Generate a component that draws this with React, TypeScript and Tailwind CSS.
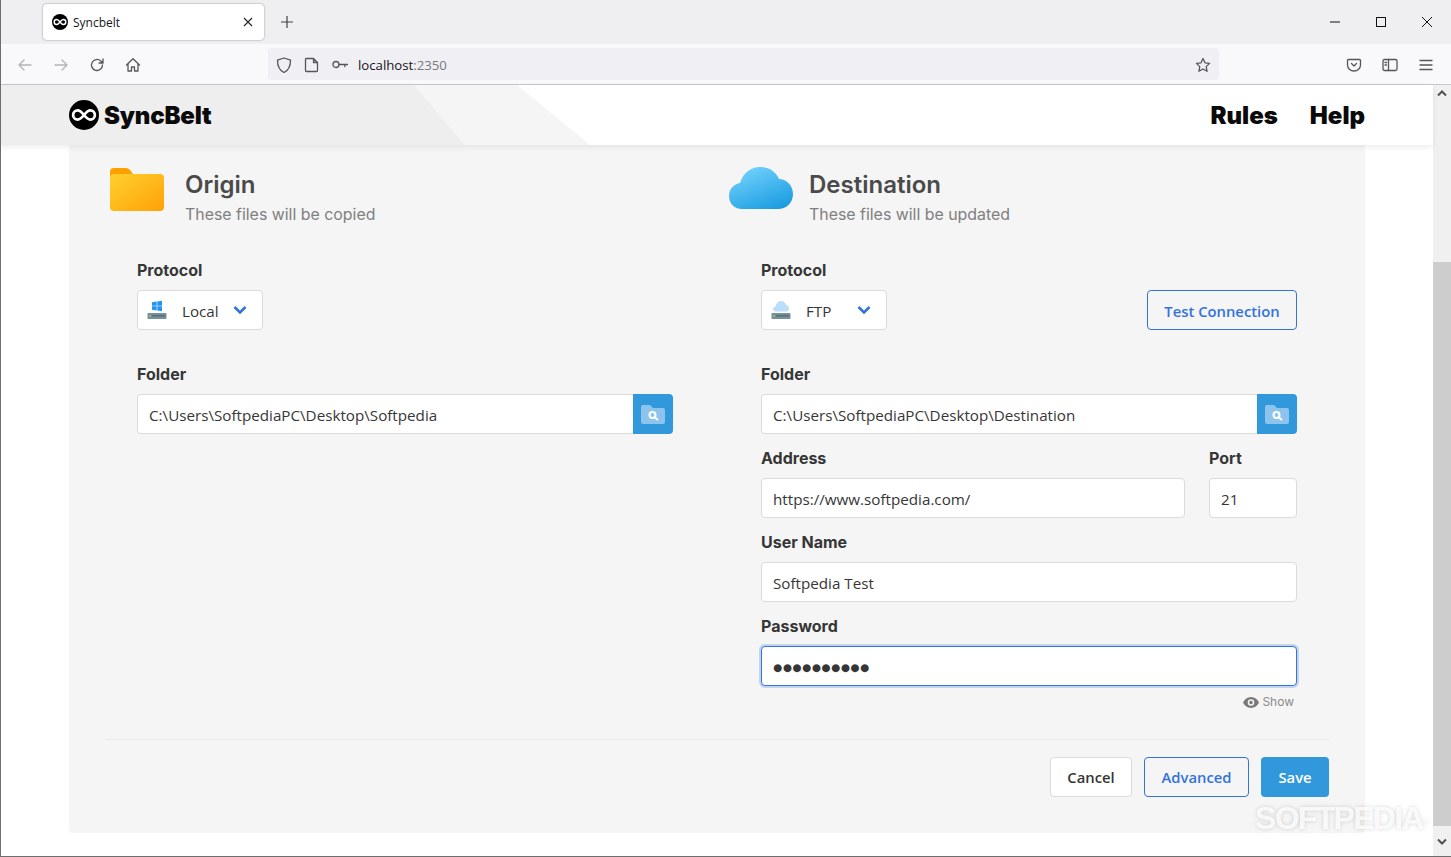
import React from 'react'

const Logo = ({ size }: { size: number }) => (
  <svg width={size} height={size} viewBox="0 0 24 24">
    <circle cx="12" cy="12" r="12" fill="#000" />
    <path
      d="M12 12C10 9.500 8.600 8.300 7 8.300a3.700 3.700 0 0 0 0 7.400c1.600 0 3-1.200 5-3.700s3.400-3.700 5-3.700a3.700 3.700 0 0 1 0 7.400c-1.600 0-3-1.200-5-3.700z"
      fill="none"
      stroke="#fff"
      strokeWidth="2.200"
    />
  </svg>
)

const ChromeIcon = ({ children, light }: { children: React.ReactNode; light?: boolean }) => (
  <div className="w-9 h-8 flex items-center justify-center pt-[2px]">
    <svg
      width="16"
      height="16"
      viewBox="0 0 16 16"
      fill="none"
      stroke={light ? '#b4b4b8' : '#55555a'}
      strokeWidth="1.300"
      strokeLinecap="round"
      strokeLinejoin="round"
    >
      {children}
    </svg>
  </div>
)

const UrlIcon = ({ children, className }: { children: React.ReactNode; className: string }) => (
  <svg
    className={className}
    width="16"
    height="16"
    viewBox="0 0 16 16"
    fill="none"
    stroke="#55555a"
    strokeWidth="1.300"
    strokeLinecap="round"
    strokeLinejoin="round"
  >
    {children}
  </svg>
)

const WinBtn = ({ children }: { children: React.ReactNode }) => (
  <div className="w-[46px] h-[44px] flex items-center justify-center">
    <svg width="12" height="12" viewBox="0 0 12 12" fill="none" stroke="#111" strokeWidth="1">
      {children}
    </svg>
  </div>
)

const BrowserChrome = () => (
  <div className="shrink-0" style={{ fontFamily: '"Open Sans", sans-serif' }}>
    <div className="h-[44px] bg-[#efeff1] flex items-start">
      <div className="ml-[42px] mt-[4px] w-[221px] h-[36px] bg-white rounded shadow-[0_0_2px_rgba(0,0,0,0.45)] flex items-center pl-[9px] pr-[11px]">
        <Logo size={16} />
        <span className="ml-[5px] pt-[1px] text-[12px] text-[#15141a]">Syncbelt</span>
        <svg className="ml-auto" width="10" height="10" viewBox="0 0 10 10" stroke="#222" strokeWidth="1.100">
          <path d="M1 1l8 8M9 1l-8 8" />
        </svg>
      </div>
      <svg className="ml-[16px] mt-[15px]" width="14" height="14" viewBox="0 0 14 14" stroke="#444" strokeWidth="1.200">
        <path d="M7 1v12M1 7h12" />
      </svg>
      <div className="ml-auto flex pr-[1px]">
        <WinBtn>
          <path d="M1 6h10" />
        </WinBtn>
        <WinBtn>
          <rect x="1.500" y="1.500" width="9" height="9" />
        </WinBtn>
        <WinBtn>
          <path d="M1 1l10 10M11 1L1 11" />
        </WinBtn>
      </div>
    </div>
    <div className="h-[41px] bg-[#f9f9fb] border-b border-[#c8c8cc] flex items-start pl-[6px] pt-[4px]">
      <ChromeIcon light>
        <path d="M14 8H2M7 3L2 8l5 5" />
      </ChromeIcon>
      <ChromeIcon light>
        <path d="M2 8h12M9 3l5 5-5 5" />
      </ChromeIcon>
      <ChromeIcon>
        <path d="M13.500 8a5.500 5.500 0 1 1-1.700-4L14 6V2M14 6h-4" />
      </ChromeIcon>
      <ChromeIcon>
        <path d="M1.500 8L8 1.800 14.500 8M3 7v7h3.500v-4h3v4H13V7" />
      </ChromeIcon>
      <div className="ml-[117px] w-[951px] h-[32px] pt-[2px] bg-[#f0f0f4] rounded flex items-center">
        <UrlIcon className="ml-[8px]">
          <path d="M8 1l6.500 2.200c0 6-1.800 10-6.500 12.300C3.300 13.200 1.500 9.200 1.500 3.200z" />
        </UrlIcon>
        <UrlIcon className="ml-[12px]">
          <path d="M2.500 1.500h7l4 4v8a1 1 0 0 1-1 1h-10a1 1 0 0 1-1-1v-11a1 1 0 0 1 1-1zM9.500 1.500v4h4" />
        </UrlIcon>
        <UrlIcon className="ml-[12px]">
          <circle cx="4" cy="7.500" r="3" />
          <path d="M7 7.500h8.500M12.800 7.500v2" />
        </UrlIcon>
        <span className="ml-[10px] text-[13.2px] text-[#15141a] pt-[2px]">
          localhost<span className="text-[#77777c]">:2350</span>
        </span>
        <UrlIcon className="ml-auto mr-[8px]">
          <path d="M8 1.500l2 4.300 4.600.6-3.400 3.200.9 4.700L8 12l-4.100 2.300.9-4.700L1.400 6.400 6 5.800z" />
        </UrlIcon>
      </div>
      <div className="ml-[117px] flex">
        <ChromeIcon>
          <path d="M2.500 2.500h11a1 1 0 0 1 1 1V8a6.500 6 0 0 1-13 0V3.500a1 1 0 0 1 1-1zM5.500 6.500L8 9l2.500-2.500" />
        </ChromeIcon>
        <ChromeIcon>
          <rect x="1" y="2.500" width="14" height="11" rx="1.500" />
          <path d="M6.500 2.500v11M3 5.500h1.500M3 8h1.500" />
        </ChromeIcon>
        <ChromeIcon>
          <path d="M2 3.500h12M2 8h12M2 12.500h12" />
        </ChromeIcon>
      </div>
    </div>
  </div>
)

const Header = () => (
  <header className="relative z-10 h-[60px] bg-white shadow-[0_2px_6px_rgba(0,0,0,0.08)] flex items-center justify-between pl-[69px] pr-[68px] shrink-0">
    <svg className="absolute left-0 top-0" width="600" height="60" viewBox="0 0 600 60">
      <path d="M517 0L590 60H0V0z" fill="#f5f5f5" />
      <path d="M414 0L465 60H0V0z" fill="#eeeeee" />
    </svg>
    <div className="relative flex items-center gap-[5px]">
      <Logo size={30} />
      <span className="pt-[2px] text-[24px] font-black tracking-[-0.2px] text-[#0a0a0a] leading-none">SyncBelt</span>
    </div>
    <nav className="relative pt-[2px] flex gap-[32px] text-[24px] font-black text-[#0a0a0a]">
      <span>Rules</span>
      <span>Help</span>
    </nav>
  </header>
)

const FolderArt = () => (
  <svg width="54" height="44" viewBox="0 0 54 44">
    <defs>
      <linearGradient id="folderFront" x1="0" y1="0" x2="1" y2="1">
        <stop offset="0" stopColor="#ffd02f" />
        <stop offset="1" stopColor="#ffa106" />
      </linearGradient>
    </defs>
    <path d="M0 4a4 4 0 0 1 4-4h12c2 0 3 1 4 2l3 4v8H0z" fill="#ffa000" />
    <rect x="0" y="6" width="54" height="37" rx="4" fill="url(#folderFront)" />
  </svg>
)

const CloudArt = () => (
  <svg width="64" height="42" viewBox="0 0 64 42">
    <defs>
      <linearGradient id="cloudFill" x1="0.2" y1="0" x2="0.8" y2="1">
        <stop offset="0" stopColor="#74d3fd" />
        <stop offset="1" stopColor="#1a9be0" />
      </linearGradient>
    </defs>
    <path
      d="M13 42C5 42 0 36 0 29C0 22 5 17 11 16C14 6 22 0 31 0C40 0 47 5 50 12C58 12 64 19 64 27C64 36 57 42 49 42Z"
      fill="url(#cloudFill)"
    />
  </svg>
)

const DriveIcon = ({ cloud }: { cloud?: boolean }) => (
  <svg width="20" height="20" viewBox="0 0 20 20">
    {cloud ? (
      <path
        d="M5 11.500C3 11.500 2 10.500 2 9C2 7.500 3 6.500 4.500 6.500C5 3.500 7 1 10 1C13 1 14.500 3 15 5C17 5 18 7 18 8.500C18 10.500 17 11.500 15 11.500Z"
        fill="#bbdefb"
      />
    ) : (
      <path d="M5 2.200L9.700 1.500V5.700H5zM10.300 1.400L15 .7V5.700h-4.700zM5 6.300h4.700v4.200L5 9.800zM10.300 6.300H15v5l-4.700-.7z" fill="#2196f3" />
    )}
    <rect x="0.500" y="13" width="19" height="6" rx="0.800" fill="#78909c" />
    <rect x="5" y="15" width="13" height="1.500" fill="#546e7a" />
    <rect x="2" y="15" width="1.800" height="2" fill="#8bc34a" />
  </svg>
)

const Label = ({ children }: { children: React.ReactNode }) => (
  <label className="block h-6 mb-2 text-[16px] leading-6 font-bold text-[#363636]">{children}</label>
)

const inputBase = 'w-full h-10 px-[11px] bg-white border rounded text-[#363636] outline-none'
const textInput = `${inputBase} pt-[2px] text-[15.2px] border-[#dbdbdb]`

const ProtocolSelect = ({ value, cloud }: { value: string; cloud?: boolean }) => (
  <div className="w-[126px] h-10 bg-white border border-[#dbdbdb] rounded flex items-center pl-[9px] text-[15.2px] text-[#363636]">
    <DriveIcon cloud={cloud} />
    <span className="ml-[15px] pt-[2px]" style={{ fontFamily: '"Open Sans", sans-serif' }}>
      {value}
    </span>
    <svg className="ml-auto mr-[15px]" width="14" height="10" viewBox="0 0 14 10" fill="none" stroke="#3273dc" strokeWidth="2.600">
      <path d="M1.500 2l5.500 5.500L12.500 2" />
    </svg>
  </div>
)

const FolderField = ({ value }: { value: string }) => (
  <div>
    <Label>Folder</Label>
    <div className="flex">
      <input
        readOnly
        value={value}
        className={`${textInput} rounded-r-none border-r-0`}
        style={{ fontFamily: '"Open Sans", sans-serif' }}
      />
      <div className="w-10 h-10 shrink-0 bg-[#3298dc] rounded-r flex items-center justify-center">
        <svg width="24" height="19" viewBox="0 0 24 19">
          <path
            d="M0 2a2 2 0 0 1 2-2h6c1 0 1.500.5 2 1l2 2h10a2 2 0 0 1 2 2v12a2 2 0 0 1-2 2H2a2 2 0 0 1-2-2z"
            fill="#8cc4ee"
          />
          <circle cx="11.500" cy="10" r="3" fill="none" stroke="#fff" strokeWidth="2" />
          <path d="M14 12.500l3 2.500" stroke="#fff" strokeWidth="2.200" />
        </svg>
      </div>
    </div>
  </div>
)

const Field = ({ label, value, className }: { label: string; value: string; className?: string }) => (
  <div className={className}>
    <Label>{label}</Label>
    <input readOnly value={value} className={textInput} style={{ fontFamily: '"Open Sans", sans-serif' }} />
  </div>
)

const ColumnHead = ({ art, title, sub, indent }: { art: React.ReactNode; title: string; sub: string; indent: string }) => (
  <div className={`flex h-[89px] pt-[23px] ${indent}`}>
    {art}
    <div className="pt-[2px]">
      <h2 className="text-[24px] leading-[30px] font-semibold text-[#4a4a4a]">{title}</h2>
      <p className="mt-[3px] text-[15.9px] leading-6 text-[#808080]">{sub}</p>
    </div>
  </div>
)

const Btn = ({ children, className }: { children: React.ReactNode; className: string }) => (
  <button
    className={`h-10 rounded border text-[14.8px] font-semibold flex items-center justify-center ${className}`}
    style={{ fontFamily: '"Open Sans", sans-serif' }}
  >
    {children}
  </button>
)

const Panel = () => (
  <main className="ml-[69px] w-[1296px] h-[688px] bg-[#f5f5f5] rounded-b px-9 shrink-0">
    <div className="grid grid-cols-[600px_600px] gap-x-6">
      <section>
        <ColumnHead
          indent="pl-[5px]"
          art={
            <div className="w-[75px] shrink-0">
              <FolderArt />
            </div>
          }
          title="Origin"
          sub="These files will be copied"
        />
        <div className="px-8 pt-6 flex flex-col gap-8">
          <div>
            <Label>Protocol</Label>
            <ProtocolSelect value="Local" />
          </div>
          <FolderField value="C:\Users\SoftpediaPC\Desktop\Softpedia" />
        </div>
      </section>
      <section>
        <ColumnHead
          indent=""
          art={
            <div className="w-[80px] shrink-0 -mt-[1px]">
              <CloudArt />
            </div>
          }
          title="Destination"
          sub="These files will be updated"
        />
        <div className="px-8 pt-6">
          <div className="flex items-end justify-between">
            <div>
              <Label>Protocol</Label>
              <ProtocolSelect value="FTP" cloud />
            </div>
            <Btn className="w-[150px] pt-[2px] bg-transparent border-[#3273dc] text-[#3273dc]">Test Connection</Btn>
          </div>
          <div className="mt-8">
            <FolderField value="C:\Users\SoftpediaPC\Desktop\Destination" />
          </div>
          <div className="mt-3 flex gap-6">
            <Field className="flex-1" label="Address" value="https://www.softpedia.com/" />
            <Field className="w-[88px]" label="Port" value="21" />
          </div>
          <Field className="mt-3" label="User Name" value="Softpedia Test" />
          <div className="mt-3">
            <Label>Password</Label>
            <input
              readOnly
              value="●●●●●●●●●●"
              className={`${inputBase} pt-[1px] text-[10.4px] tracking-[0.6px] border-[#3273dc] shadow-[0_0_0_2px_rgba(50,115,220,0.25)]`}
              style={{ fontFamily: '"DejaVu Sans", sans-serif' }}
            />
            <div className="mt-[7px] pr-[3px] h-[18px] flex items-center justify-end gap-[3px] text-[12px] text-[#8a8a8a]">
              <svg width="16" height="11" viewBox="0 0 16 11">
                <path
                  fillRule="evenodd"
                  d="M8 0c3.500 0 6.500 2.200 8 5.500C14.500 8.800 11.500 11 8 11S1.500 8.800 0 5.500C1.500 2.200 4.500 0 8 0zm0 2.200a3.300 3.300 0 1 0 0 6.600 3.300 3.300 0 0 0 0-6.600zm0 1.500a1.800 1.800 0 1 1 0 3.600 1.800 1.800 0 0 1 0-3.600z"
                  fill="#7a7a7a"
                />
              </svg>
              Show
            </div>
          </div>
        </div>
      </section>
    </div>
    <div className="mt-[28px] border-t border-[#e8e8e8] pt-[17px] flex justify-end gap-3">
      <Btn className="w-[82px] bg-white border-[#dbdbdb] text-[#363636]">Cancel</Btn>
      <Btn className="w-[105px] bg-transparent border-[#3273dc] text-[#3273dc]">Advanced</Btn>
      <Btn className="w-[68px] bg-[#3298dc] border-transparent text-white">Save</Btn>
    </div>
  </main>
)

const Scrollbar = () => (
  <div className="w-[18px] shrink-0 bg-[#f0f0f0] flex flex-col">
    <div className="h-[17px] flex items-center justify-center shrink-0">
      <svg width="10" height="7" viewBox="0 0 10 7" fill="none" stroke="#505050" strokeWidth="2">
        <path d="M1 5.500l4-4 4 4" />
      </svg>
    </div>
    <div className="h-[160px] shrink-0" />
    <div className="h-[564px] bg-[#cdcdcd] shrink-0" />
    <div className="flex-1 flex items-center justify-center">
      <svg width="10" height="7" viewBox="0 0 10 7" fill="none" stroke="#505050" strokeWidth="2">
        <path d="M1 1.500l4 4 4-4" />
      </svg>
    </div>
  </div>
)

const App = () => {
  return (
    <div
      className="relative w-[1451px] h-[857px] overflow-hidden bg-white border-l border-b border-[#6e6e6e] flex flex-col"
      style={{ fontFamily: 'Inter, sans-serif' }}
    >
      <BrowserChrome />
      <div className="flex flex-1 min-h-0">
        <div className="flex-1 flex flex-col -ml-[1px]">
          <Header />
          <Panel />
        </div>
        <Scrollbar />
      </div>
      <span
        className="absolute left-[1254px] top-[794px] text-[32px] font-bold tracking-[-1.7px] text-white/80 [text-shadow:0_0_4px_rgba(0,0,0,0.16)]"
        style={{ fontFamily: '"Liberation Sans", sans-serif' }}
      >
        SOFTPEDIA<sup className="text-[9px] font-normal">®</sup>
      </span>
    </div>
  )
}

export default App
